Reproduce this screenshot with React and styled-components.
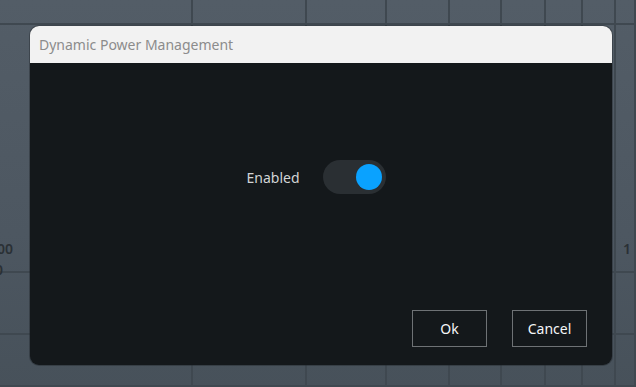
import React, { useState } from "react";
import styled, { createGlobalStyle } from "styled-components";

const GlobalStyle = createGlobalStyle`
  html, body {
    margin: 0;
    padding: 0;
    width: 636px;
    height: 387px;
    overflow: hidden;
    font-family: "Segoe UI", "Noto Sans", "Open Sans", sans-serif;
  }
`;

const Canvas = styled.div`
  position: relative;
  width: 636px;
  height: 387px;
  overflow: hidden;
  background: linear-gradient(180deg, #535d67 0%, #4d5761 60%, #47515a 100%);
  display: grid;
  grid-template-columns: 193px 114px 80px 63px 52px 44px 37px 33px 1fr;
  grid-template-rows: 25px 248px 62px 1fr;
`;

const Cell = styled.div`
  position: relative;
  border-right: 2px solid #3f4850;
  border-bottom: 2px solid #3f4850;
  box-sizing: border-box;
`;

const Tick = styled.span`
  position: absolute;
  top: ${(p) => p.top}px;
  ${(p) => (p.right ? "right: 3px;" : `left: ${p.left}px;`)}
  font-size: 14px;
  font-weight: 600;
  color: #2a3035;
`;

const Overlay = styled.div`
  position: absolute;
  left: 30px;
  top: 26px;
  width: 582px;
  height: 339px;
  border-radius: 9px;
  overflow: hidden;
  display: flex;
  flex-direction: column;
  background: #14181b;
  box-shadow: 0 0 0 1px rgba(30, 35, 40, 0.4);
`;

const Header = styled.div`
  height: 37px;
  flex: none;
  background: #f2f2f2;
  color: #8c8c8c;
  font-size: 14px;
  display: flex;
  align-items: center;
  padding-left: 9px;
`;

const Body = styled.div`
  flex: 1;
  display: flex;
  flex-direction: column;
  padding: 97px 25px 18px 25px;
`;

const Row = styled.div`
  display: flex;
  align-items: center;
  justify-content: center;
  gap: 23px;
  padding-right: 10px;
`;

const Label = styled.span`
  color: #d2d4d6;
  font-size: 14px;
`;

const Switch = styled.button`
  width: 63px;
  height: 34px;
  border: none;
  border-radius: 17px;
  background: #2a2f33;
  padding: 0 4px;
  display: flex;
  align-items: center;
  justify-content: ${(p) => (p.on ? "flex-end" : "flex-start")};
  cursor: pointer;
`;

const Knob = styled.span`
  width: 26px;
  height: 26px;
  border-radius: 50%;
  background: ${(p) => (p.on ? "#0aa2ff" : "#7a7f84")};
`;

const Footer = styled.div`
  margin-top: auto;
  display: flex;
  justify-content: flex-end;
  gap: 25px;
`;

const Button = styled.button`
  width: 75px;
  height: 37px;
  background: transparent;
  border: 1px solid #6e7275;
  color: #f4f6f8;
  font-family: inherit;
  font-size: 14px;
  cursor: pointer;
`;

const cols = 9;
const rows = 4;

export default function App() {
  const [on, setOn] = useState(true);
  const cells = [];
  for (let r = 0; r < rows; r++) {
    for (let c = 0; c < cols; c++) {
      let tick = null;
      if (r === 1 && c === 0)
        tick = (
          <>
            <Tick left={-11} top={214}>100</Tick>
            <Tick left={-5} top={235}>0</Tick>
          </>
        );
      if (r === 1 && c === cols - 1)
        tick = (
          <Tick right top={214}>
            1
          </Tick>
        );
      cells.push(<Cell key={`${r}-${c}`}>{tick}</Cell>);
    }
  }

  return (
    <>
      <GlobalStyle />
      <Canvas>
        {cells}
        <Overlay>
          <Header>Dynamic Power Management</Header>
          <Body>
            <Row>
              <Label>Enabled</Label>
              <Switch on={on} onClick={() => setOn(!on)}>
                <Knob on={on} />
              </Switch>
            </Row>
            <Footer>
              <Button>Ok</Button>
              <Button>Cancel</Button>
            </Footer>
          </Body>
        </Overlay>
      </Canvas>
    </>
  );
}
